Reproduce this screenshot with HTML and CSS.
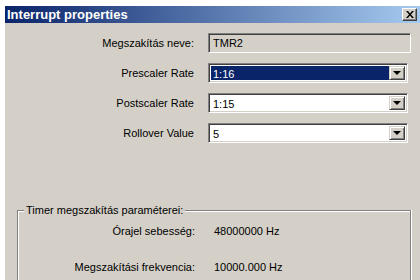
FILE: index.html
```html
<!DOCTYPE html>
<html lang="hu">
<head>
    <meta charset="UTF-8">
    <title>Interrupt properties</title>
    <link rel="stylesheet" href="styles.css">
</head>
<body>
    <div class="window">
        <div class="titlebar">
            <span class="title">Interrupt properties</span>
            <span class="close">
                <svg width="8" height="7" viewBox="0 0 8 7"><path d="M0 0h2l2 2.5 2-2.5h2l-3 3.5 3 3.5h-2l-2-2.5-2 2.5h-2l3-3.5z" fill="#000"/></svg>
            </span>
        </div>
        <div class="content">
            <div class="form">
                <label>Megszakítás neve:</label>
                <div class="field readonly">TMR2</div>

                <label>Prescaler Rate</label>
                <div class="combo">
                    <div class="value selected">1:16</div>
                    <span class="arrow"></span>
                </div>

                <label>Postscaler Rate</label>
                <div class="combo">
                    <div class="value">1:15</div>
                    <span class="arrow"></span>
                </div>

                <label>Rollover Value</label>
                <div class="combo">
                    <div class="value">5</div>
                    <span class="arrow"></span>
                </div>
            </div>

            <div class="group">
                <div class="legend">Timer megszakítás paraméterei:</div>
                <div class="params">
                    <label>Órajel sebesség:</label>
                    <span>48000000 Hz</span>
                    <label>Megszakítási frekvencia:</label>
                    <span>10000.000 Hz</span>
                </div>
            </div>
        </div>
    </div>
</body>
</html>
```

FILE: styles.css
```css
* {
    margin: 0;
    padding: 0;
    box-sizing: border-box;
}
html, body {
    height: 100%;
    overflow: hidden;
}
body {
    background-color: #fff;
    font-family: "Liberation Sans", Arial, sans-serif;
    font-size: 11px;
    color: #000;
}
.window {
    margin: 6px 0 0 4px;
    height: calc(100% - 6px);
    overflow: hidden;
    background-color: #d4d0c8;
    border-left: 1px solid #fff;
}
.titlebar {
    height: 17px;
    display: flex;
    align-items: center;
    justify-content: space-between;
    padding: 0 3px 0 2px;
    background: linear-gradient(to right, #0a246a, #a6caf0);
}
.title {
    color: #fff;
    font-weight: bold;
    font-size: 13px;
}
.close {
    width: 15px;
    height: 13px;
    display: flex;
    align-items: center;
    justify-content: center;
    background-color: #d4d0c8;
    border-top: 1px solid #fff;
    border-left: 1px solid #fff;
    border-right: 1px solid #404040;
    border-bottom: 1px solid #404040;
    box-shadow: inset -1px -1px 0 #808080;
}
.form {
    display: grid;
    grid-template-columns: 189px 203px;
    column-gap: 14px;
    row-gap: 10px;
    align-items: center;
    padding-top: 10px;
}
label {
    text-align: right;
}
.field, .combo {
    height: 20px;
    border-top: 1px solid #808080;
    border-left: 1px solid #808080;
    border-right: 1px solid #fff;
    border-bottom: 1px solid #fff;
    box-shadow: inset 1px 1px 0 #404040, inset -1px -1px 0 #d4d0c8;
}
.field {
    padding: 3px 4px;
}
.readonly {
    background-color: #d4d0c8;
}
.combo {
    width: 200px;
    display: flex;
    padding: 2px;
    background-color: #fff;
}
.value {
    flex: 1;
    padding: 1px 2px;
    line-height: 14px;
}
.selected {
    background-color: #0a246a;
    color: #fff;
}
.arrow {
    width: 16px;
    background-color: #d4d0c8;
    border-top: 1px solid #d4d0c8;
    border-left: 1px solid #d4d0c8;
    border-right: 1px solid #404040;
    border-bottom: 1px solid #404040;
    box-shadow: inset 1px 1px 0 #fff, inset -1px -1px 0 #808080;
    display: flex;
    align-items: center;
    justify-content: center;
}
.arrow::after {
    content: "";
    border-left: 4px solid transparent;
    border-right: 4px solid transparent;
    border-top: 4px solid #000;
}
.group {
    margin: 67px 0 0 12px;
    width: 394px;
    height: 90px;
    border-top: 1px solid #808080;
    border-left: 1px solid #808080;
    border-right: 1px solid #808080;
    box-shadow: inset 1px 1px 0 #fff, 1px 0 0 #fff;
}
.legend {
    display: inline-block;
    margin: -7px 0 0 6px;
    padding: 0 2px;
    background-color: #d4d0c8;
    vertical-align: top;
}
.params {
    display: grid;
    grid-template-columns: 177px auto;
    column-gap: 19px;
    row-gap: 23px;
    padding-top: 2px;
    line-height: 13px;
}
```
